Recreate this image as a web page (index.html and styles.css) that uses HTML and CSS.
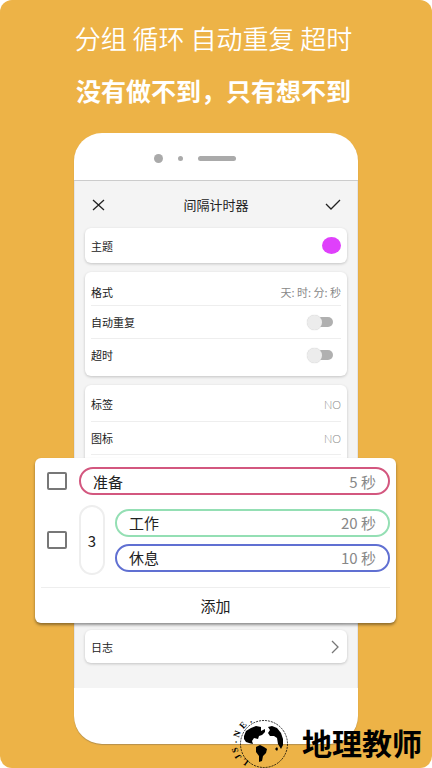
FILE: index.html
```html
<!DOCTYPE html>
<html lang="zh-CN">
<head>
<meta charset="utf-8">
<meta name="viewport" content="width=device-width, initial-scale=1">
<title>间隔计时器</title>
<link rel="stylesheet" href="styles.css">
</head>
<body>
<main class="poster">
  <header class="headline">
    <p class="headline-light">分组 循环 自动重复 超时</p>
    <h1 class="headline-bold">没有做不到，只有想不到</h1>
  </header>

  <section class="phone">
    <div class="phone-top">
      <span class="camera"></span>
      <span class="sensor"></span>
      <span class="speaker"></span>
    </div>
    <div class="screen">
      <div class="app-bar">
        <button class="icon-button" type="button" aria-label="关闭">
          <svg width="16" height="16" viewBox="0 0 16 16"><path d="M2 3l11 10M13 3L2 13"/></svg>
        </button>
        <h2 class="app-title">间隔计时器</h2>
        <button class="icon-button" type="button" aria-label="完成">
          <svg width="16" height="16" viewBox="0 0 16 16"><path d="M1 7l5 5L15 3"/></svg>
        </button>
      </div>

      <div class="card">
        <div class="row row-theme"><span>主题</span><button class="swatch" type="button" aria-label="主题颜色"></button></div>
      </div>

      <div class="card card-format">
        <div class="row"><span>格式</span><span class="value">天: 时: 分: 秒</span></div>
        <div class="row"><label for="repeat">自动重复</label><input class="switch" id="repeat" type="checkbox"></div>
        <div class="row"><label for="overtime">超时</label><input class="switch" id="overtime" type="checkbox"></div>
      </div>

      <div class="card card-label">
        <div class="row"><span>标签</span><span class="value value-no">NO</span></div>
        <div class="row"><span>图标</span><span class="value value-no">NO</span></div>
      </div>

      <div class="card card-log">
        <a class="row row-log" href="#"><span>日志</span>
          <svg width="10" height="14" viewBox="0 0 10 14"><path d="M1 1l6 6-6 6"/></svg>
        </a>
      </div>
    </div>
    <div class="phone-bottom"></div>

    <div class="intervals">
      <div class="interval-group">
        <input class="tick" type="checkbox" aria-label="准备">
        <div class="pill pill-red"><span>准备</span><span class="time">5 秒</span></div>
      </div>
      <div class="interval-group">
        <input class="tick" type="checkbox" aria-label="循环">
        <div class="count">3</div>
        <div class="pill-stack">
          <div class="pill pill-green"><span>工作</span><span class="time">20 秒</span></div>
          <div class="pill pill-blue"><span>休息</span><span class="time">10 秒</span></div>
        </div>
      </div>
      <button class="add" type="button">添加</button>
    </div>
  </section>

  <div class="watermark">
    <svg class="globe" width="62" height="52" viewBox="0 0 62 52">
      <circle class="globe-ring" cx="36" cy="28" r="23.500"/>
      <path d="M16 20l2-5 5-3 5-2 5 1 0 4 4-2 0 3-3 3-3 1-1 3-4-1-2 3 1 3-4-1-3-1-2-3z"/>
      <path d="M40 11l4-1 5 2 4 5 2 6 0 6-2 4-3-5-1-6-3-2-4 0-2-3 2-3z"/>
      <path d="M28 31l4-2 4 2 3 2-1 4-3 3-1 5-3 1 0-6-3-4z"/>
      <path d="M47 33l2-2 1 2-1 2z"/>
      <g class="globe-text">
        <text transform="translate(17 46) rotate(218)">L</text>
        <text transform="translate(10 41) rotate(238)">J</text>
        <text transform="translate(7 34) rotate(255)">S</text>
        <text transform="translate(8 26) rotate(272)">·</text>
        <text transform="translate(9 18) rotate(290)">N</text>
        <text transform="translate(15 9) rotate(311)">E</text>
        <text transform="translate(23 6) rotate(331)">·</text>
      </g>
    </svg>
    <span class="watermark-name">地理教师</span>
  </div>
</main>
</body>
</html>
```
FILE: styles.css
```css
* { box-sizing: border-box; }

body {
  margin: 0;
  background: #fff;
  color: #222;
  font-family: "Noto Sans CJK SC", sans-serif;
}

h1, h2, p { margin: 0; }

button {
  padding: 0;
  border: 0;
  background: none;
  color: inherit;
  font: inherit;
}

.poster {
  position: relative;
  min-height: 100vh;
  padding: 20px 0 24px;
  border-radius: 12px;
  background: #edb347;
}

.headline {
  padding-right: 5px;
  color: #fff;
  font-size: 26px;
  line-height: 36px;
  text-align: center;
  white-space: nowrap;
}

.headline-light { font-weight: 350; }

.headline-bold {
  margin-top: 16px;
  font-size: 25px;
  font-weight: 700;
}

.phone {
  position: relative;
  margin: 25px 74px 0;
  border-radius: 28px;
  background: #fff;
  box-shadow: 0 1px 1px #b5904c;
}

.phone-top {
  display: flex;
  align-items: center;
  gap: 15px;
  height: 48px;
  padding: 4px 0 0 80px;
  border-bottom: 1px solid #ccc;
}

.phone-top span { background: #aaa; border-radius: 5px; }
.camera { width: 9px; height: 9px; }
.sensor { width: 5px; height: 5px; }
.speaker { width: 38px; height: 5px; }

.screen {
  height: 507px;
  padding: 0 10px;
  border: solid #e4e4e8;
  border-width: 0 1px;
  background: #f4f4f4;
}

.app-bar {
  display: flex;
  align-items: center;
  justify-content: space-between;
  height: 47px;
  padding: 0 6px;
}

.icon-button { display: flex; }

svg { display: block; }

.icon-button path, .row-log path {
  fill: none;
  stroke: #222;
  stroke-width: 1.3;
}

.app-title { font-size: 13px; font-weight: 400; }

.card {
  padding: 0 6px;
  border-radius: 6px;
  background: #fff;
  box-shadow: 0 1px 3px rgba(0, 0, 0, 0.2);
  font-size: 11px;
}

.row {
  display: flex;
  align-items: center;
  justify-content: space-between;
  height: 33px;
}

.row + .row { border-top: 1px solid #eee; }
.row-theme { height: 35px; }

.swatch {
  width: 19px;
  height: 17px;
  border-radius: 50%;
  background: #df40fb;
}

.card-format { margin-top: 9px; padding-top: 6px; padding-bottom: 5px; }
.card-format .row:first-child { height: 27px; }
.card-format .row + .row { height: 33px; }
.value { color: #888; }
.value-no { color: #888; font-family: Lato, sans-serif; font-weight: 300; }

.switch {
  appearance: none;
  display: flex;
  align-items: center;
  width: 22px;
  height: 10px;
  margin: 0 8px 0 0;
  border-radius: 5px;
  background: #b0b0b0;
}

.switch::before {
  content: "";
  width: 15px;
  height: 15px;
  flex: none;
  margin-left: -4px;
  border-radius: 50%;
  background: #ececec;
  box-shadow: 0 0 1px #bbb;
}

.card-label { height: 236px; margin-top: 9px; padding-top: 2px; }
.card-label .row { height: 34px; }
.card-label .row:last-child { border-bottom: 1px solid #eee; }

.card-log { margin-top: 9px; }
.row-log { color: inherit; text-decoration: none; }
.row-log path { stroke: #777; }
.phone-bottom { height: 56px; }

.intervals {
  position: absolute;
  top: 325px;
  right: -38px;
  left: -39px;
  padding: 9px 6px 0;
  border-radius: 6px;
  background: #fff;
  box-shadow: 0 2px 3px rgba(0, 0, 0, 0.4);
  font-size: 15px;
}

.interval-group {
  display: flex;
  align-items: center;
  gap: 12px;
  padding-left: 6px;
}

.interval-group + .interval-group { margin-top: 10px; }

.tick {
  appearance: none;
  flex: none;
  width: 20px;
  height: 18px;
  margin: 0;
  border: 2px solid #777;
  border-radius: 2px;
}

.pill {
  display: flex;
  flex: 1;
  align-items: center;
  justify-content: space-between;
  height: 28px;
  padding: 0 12px;
  border: 2px solid;
  border-radius: 14px;
}

.pill-red { border-color: #d3577f; }
.pill-green { border-color: #94dfb4; }
.pill-blue { border-color: #6070d2; }
.pill span { color: #222; }
.pill .time { color: #888; }

.count {
  display: flex;
  flex: none;
  align-items: center;
  justify-content: center;
  width: 26px;
  height: 70px;
  margin-right: -2px;
  border: 2px solid #eee;
  border-radius: 13px;
}

.pill-stack {
  display: flex;
  flex: 1;
  flex-direction: column;
  gap: 7px;
}

.pill-stack .pill { flex: none; }

.add {
  display: block;
  width: 100%;
  height: 36px;
  margin-top: 12px;
  border-top: 1px solid #eee;
}

.watermark {
  position: absolute;
  right: 10px;
  bottom: 0;
  display: flex;
  align-items: center;
  gap: 12px;
  color: #000;
}

.globe-ring { fill: none; stroke: #000; stroke-width: 0.8; stroke-dasharray: 2 1; }

.globe-text {
  font: bold 9px "Liberation Serif", serif;
  text-anchor: middle;
  dominant-baseline: central;
}

.watermark-name {
  font-size: 30px;
  font-weight: 700;
  line-height: 48px;
}
```
